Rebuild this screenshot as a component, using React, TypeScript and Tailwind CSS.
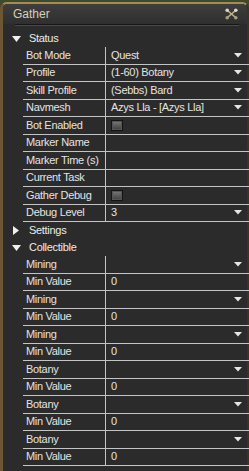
import React from 'react';

type Row = { label: string; value?: string; kind: 'select' | 'text' | 'check' };

const statusRows: Row[] = [
  { label: 'Bot Mode', value: 'Quest', kind: 'select' },
  { label: 'Profile', value: '(1-60) Botany', kind: 'select' },
  { label: 'Skill Profile', value: '(Sebbs) Bard', kind: 'select' },
  { label: 'Navmesh', value: 'Azys Lla - [Azys Lla]', kind: 'select' },
  { label: 'Bot Enabled', kind: 'check' },
  { label: 'Marker Name', kind: 'text' },
  { label: 'Marker Time (s)', kind: 'text' },
  { label: 'Current Task', kind: 'text' },
  { label: 'Gather Debug', kind: 'check' },
  { label: 'Debug Level', value: '3', kind: 'select' },
];

const collectibles = ['Mining', 'Mining', 'Mining', 'Botany', 'Botany', 'Botany'];

function Arrow() {
  return (
    <svg width="8" height="5" viewBox="0 0 8 5" className="ml-auto mr-[7px] shrink-0">
      <polygon points="0,0 8,0 4,4.5" fill="#e6e6e6" />
    </svg>
  );
}

function Tri({ open }: { open: boolean }) {
  return open ? (
    <svg width="9" height="6" viewBox="0 0 9 6" className="ml-[9px] mr-[8px]">
      <polygon points="0,0 9,0 4.5,6" fill="#f0f0f0" />
    </svg>
  ) : (
    <svg width="6" height="9" viewBox="0 0 6 9" className="ml-[10px] mr-[10px]">
      <polygon points="0,0 6,4.5 0,9" fill="#f0f0f0" />
    </svg>
  );
}

function Header({ title, open }: { title: string; open: boolean }) {
  return (
    <div className="flex items-center h-[17px] text-[#ececec]">
      <Tri open={open} />
      <span>{title}</span>
    </div>
  );
}

function PropRow({ row }: { row: Row }) {
  return (
    <div className="flex h-[17.5px] border-b border-[#c4c4c4] ml-[20px] w-[226px]">
      <div className="w-[83px] shrink-0 border-r border-[#c4c4c4] pl-[3px] flex items-center text-[#e4e4e4] whitespace-nowrap overflow-hidden">
        {row.label}
      </div>
      <div className="flex-1 flex items-center pl-[5px] text-[#e4e4e4] whitespace-nowrap">
        {row.kind === 'check' ? (
          <div className="w-[12px] h-[11px] border border-[#141414] bg-gradient-to-b from-[#7a7a7a] to-[#3e3e3e] shadow-[inset_0_0_0_1px_#555]" />
        ) : (
          <span>{row.value}</span>
        )}
        {row.kind === 'select' && <Arrow />}
      </div>
    </div>
  );
}

export default function App() {
  return (
    <div
      className="w-[249px] h-[471px] overflow-hidden bg-[#3f4a2c] text-[11px] leading-none tracking-[-0.3px]"
      style={{ fontFamily: '"Liberation Sans", Arial, sans-serif' }}
    >
      <div className="mt-[2px] h-[469px] rounded-tl-[7px] rounded-tr-[7px] border-t-[2px] border-l-[3px] border-r-[2px] border-t-[#a88a55] border-l-[#6e5534] border-r-[#3b3326] bg-[#2b2b2b]">
        {/* title bar */}
        <div className="h-[20px] flex items-center bg-gradient-to-b from-[#3e3e3e] to-[#2f2f2f] rounded-tl-[5px] rounded-tr-[5px]">
          <span className="ml-[10px] text-[12px] tracking-normal text-[#d8d0b6]">Gather</span>
          <svg width="13" height="12" viewBox="0 0 13 12" className="ml-auto mr-[9px]">
            <g stroke="#bdb394" strokeWidth="1.6" strokeLinecap="round">
              <line x1="3" y1="3" x2="10" y2="9" />
              <line x1="10" y1="3" x2="3" y2="9" />
            </g>
            <circle cx="2.2" cy="2.2" r="1.8" fill="#e0d8bc" />
            <circle cx="10.8" cy="2.2" r="1.8" fill="#e0d8bc" />
            <circle cx="2.2" cy="9.8" r="1.8" fill="#a69c80" />
            <circle cx="10.8" cy="9.8" r="1.8" fill="#a69c80" />
          </svg>
        </div>
        <div className="ml-[12px] mr-[8px] h-[2px] border-t border-[#161616] border-b border-b-[#4a4a4a]" />
        <div className="h-[4px]" />

        <Header title="Status" open />
        {statusRows.map((r, i) => (
          <PropRow key={i} row={r} />
        ))}
        <Header title="Settings" open={false} />
        <Header title="Collectible" open />
        {collectibles.map((c, i) => (
          <React.Fragment key={i}>
            <PropRow row={{ label: c, value: '', kind: 'select' }} />
            <PropRow row={{ label: 'Min Value', value: '0', kind: 'text' }} />
          </React.Fragment>
        ))}
      </div>
    </div>
  );
}
